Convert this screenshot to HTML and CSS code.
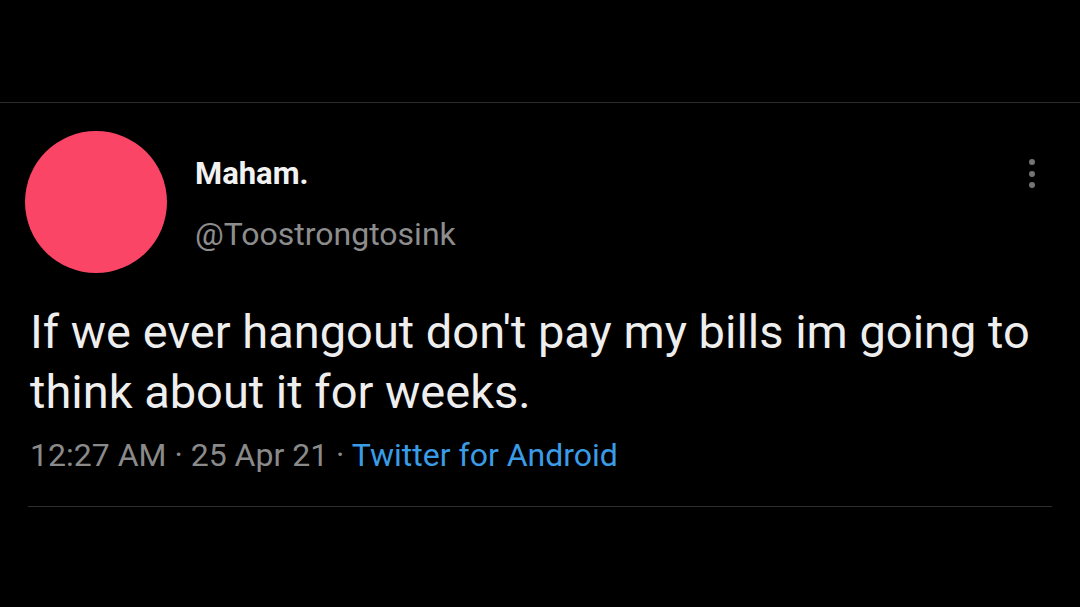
FILE: index.html
```html
<!DOCTYPE html>
<html>
<head>
<meta charset="utf-8">
<link rel="stylesheet" href="styles.css">
</head>
<body>
<div class="topbar"></div>
<article class="tweet">
  <header class="head">
    <div class="avatar"></div>
    <div class="names">
      <div class="name">Maham.</div>
      <div class="handle">@Toostrongtosink</div>
    </div>
    <div class="more"><span></span><span></span><span></span></div>
  </header>
  <p class="text">If we ever hangout don't pay my bills im going to think about it for weeks.</p>
  <div class="meta">12:27 AM · 25 Apr 21 · <span class="source">Twitter for Android</span></div>
  <div class="divider"></div>
</article>
</body>
</html>
```
FILE: styles.css
```css
html, body {
  margin: 0;
  padding: 0;
  background: #000;
  font-family: Roboto, "Noto Sans", sans-serif;
}
body {
  width: 1080px;
  height: 607px;
  overflow: hidden;
}
.topbar {
  height: 102px;
  border-bottom: 1px solid #2b2b2b;
}
.tweet {
  padding: 28px 28px 0 25px;
}
.head {
  display: flex;
  align-items: flex-start;
}
.avatar {
  width: 142px;
  height: 142px;
  border-radius: 50%;
  background: #fb4566;
  flex: none;
}
.names {
  margin-left: 28px;
  padding-top: 25px;
  flex: 1;
}
.name {
  color: #f2f2f2;
  font-weight: 700;
  font-size: 31px;
  line-height: 36px;
}
.handle {
  color: #8d8d8d;
  font-size: 32px;
  line-height: 36px;
  margin-top: 24px;
}
.more {
  display: flex;
  flex-direction: column;
  gap: 5.5px;
  padding-top: 28px;
  margin-right: 17px;
}
.more span {
  width: 6px;
  height: 6px;
  border-radius: 50%;
  background: #747474;
}
.text {
  margin: 29px 0 0 5px;
  color: #eeeeee;
  font-size: 47px;
  line-height: 60px;
}
.meta {
  margin: 15px 0 0 5px;
  color: #8a8a8a;
  font-size: 32px;
  line-height: 36px;
}
.source {
  color: #3a9be6;
}
.divider {
  margin: 33px 0 0 3px;
  border-top: 1px solid #2e2e2e;
}
```
